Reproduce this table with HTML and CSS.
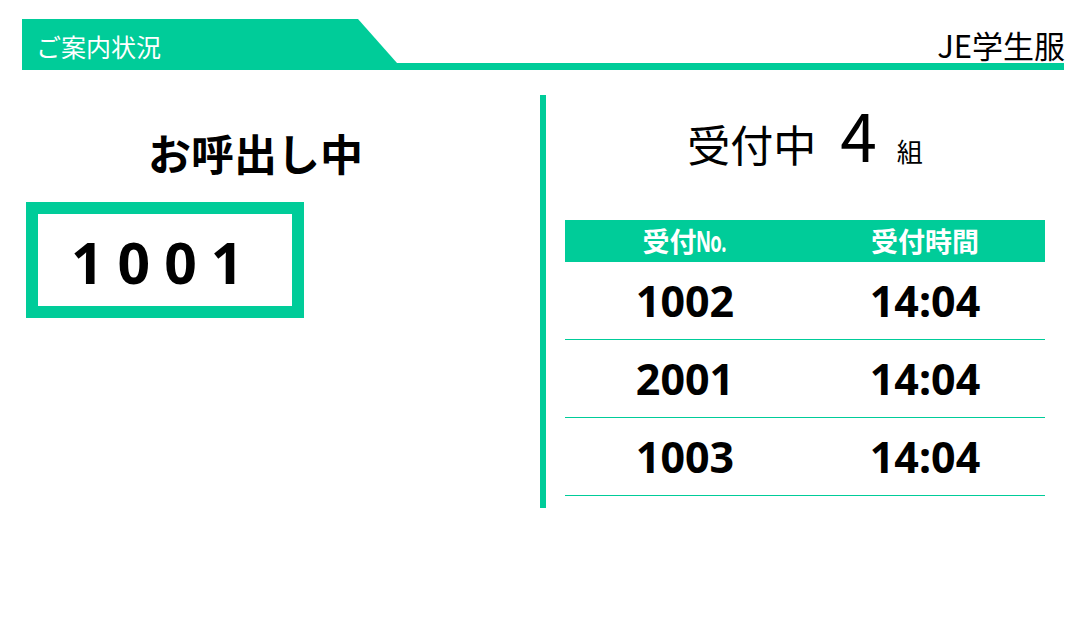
FILE: index.html
```html
<!DOCTYPE html>
<html lang="ja">
<head>
<meta charset="utf-8">
<title>ご案内状況</title>
<link rel="stylesheet" href="styles.css">
</head>
<body>
<header class="topbar">
  <div class="tab"><span class="tab-label">ご案内状況</span></div>
  <div class="brand">JE学生服</div>
</header>
<main class="board">
  <section class="calling">
    <h2 class="calling-title">お呼出し中</h2>
    <div class="call-box">1001</div>
  </section>
  <section class="waiting">
    <h2 class="count">
      <span class="count-label">受付中</span>
      <span class="count-num">4</span>
      <span class="count-unit">組</span>
    </h2>
    <div class="queue" role="table">
      <div class="queue-head" role="row">
        <div class="queue-th" role="columnheader">受付<span class="no">No.</span></div>
        <div class="queue-th" role="columnheader">受付時間</div>
      </div>
      <div class="queue-row" role="row"><div class="queue-td" role="cell">1002</div><div class="queue-td" role="cell">14:04</div></div>
      <div class="queue-row" role="row"><div class="queue-td" role="cell">2001</div><div class="queue-td" role="cell">14:04</div></div>
      <div class="queue-row" role="row"><div class="queue-td" role="cell">1003</div><div class="queue-td" role="cell">14:04</div></div>
    </div>
  </section>
</main>
</body>
</html>
```

FILE: styles.css
```css
* { box-sizing: border-box; }

html, body {
  margin: 0;
  padding: 0;
  background: #ffffff;
  color: #000000;
  font-family: "Noto Sans CJK JP", "Noto Sans", sans-serif;
}

.topbar {
  display: flex;
  justify-content: space-between;
  align-items: flex-end;
  margin: 19px 19px 0 22px;
  border-bottom: 7px solid #00cc99;
}

.tab {
  width: 375px;
  height: 44px;
  background: #00cc99;
  clip-path: polygon(0 0, 336px 0, 375px 44px, 0 44px);
  display: flex;
  align-items: flex-end;
  padding: 0 0 3px 14px;
}

.tab-label {
  color: #ffffff;
  font-size: 25px;
  line-height: 28px;
}

.brand {
  font-size: 31px;
  line-height: 31px;
  padding-bottom: 3px;
  margin-right: -1px;
  font-weight: 400;
}

.board {
  display: flex;
  padding: 25px 38px 0 26px;
}

.calling {
  width: 514px;
}

.calling-title {
  width: 459px;
  margin: 36px 0 0 0;
  text-align: center;
  font-size: 43px;
  line-height: 43px;
  font-weight: 700;
}

.call-box {
  margin-top: 28px;
  width: 278px;
  height: 116px;
  border: 12px solid #00cc99;
  padding: 19px 0 0 33px;
  font-family: "Noto Sans", sans-serif;
  font-weight: 700;
  font-size: 57px;
  line-height: 58px;
  letter-spacing: 14px;
}

.waiting {
  flex: 1;
  min-height: 413px;
  border-left: 6px solid #00cc99;
  padding-left: 19px;
}

.count {
  display: flex;
  justify-content: center;
  align-items: baseline;
  margin: 0;
  padding-top: 8px;
  height: 125px;
  font-weight: 400;
}

.count-label {
  font-size: 43px;
  line-height: 60px;
}

.count-num {
  font-size: 66px;
  line-height: 60px;
  margin-left: 24px;
}

.count-unit {
  font-size: 26px;
  line-height: 60px;
  margin-left: 20px;
}

.queue {
  width: 480px;
}

.queue-head,
.queue-row {
  display: grid;
  grid-template-columns: 1fr 1fr;
}

.queue-head {
  height: 42px;
  background: #00cc99;
  overflow: hidden;
}

.queue-th {
  color: #ffffff;
  font-size: 27px;
  font-weight: 700;
  line-height: 42px;
  text-align: center;
}

.queue-th .no {
  display: inline-block;
  font-family: "Noto Sans", sans-serif;
  font-size: 28px;
  line-height: 1;
  letter-spacing: -1px;
  transform: scaleX(0.66);
  transform-origin: left center;
  margin-right: -14px;
}

.queue-row {
  height: 78px;
  border-bottom: 1px solid #00cc99;
  align-items: center;
}

.queue-td {
  text-align: center;
  font-family: "Noto Sans", sans-serif;
  font-weight: 700;
  font-size: 43px;
  line-height: 60px;
}
```
